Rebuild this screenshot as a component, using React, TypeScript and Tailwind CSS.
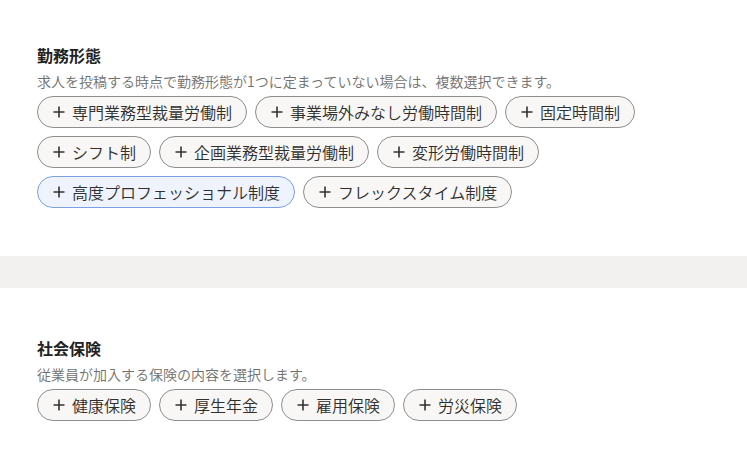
import React from "react";

const font = { fontFamily: '"Noto Sans CJK JP", "Noto Sans", sans-serif' };

function PlusIcon() {
  return (
    <svg width="12" height="12" viewBox="0 0 12 12" className="shrink-0">
      <path d="M6 0.5v11M0.5 6h11" stroke="#333333" strokeWidth="1.6" />
    </svg>
  );
}

function Chip({ label, selected }: { label: string; selected?: boolean }) {
  return (
    <button
      className={
        "flex h-8 items-center gap-[7px] rounded-full border pl-[15px] pr-[14px] text-base font-[350] text-[#2f2f2f] " +
        (selected ? "border-[#7d9fe6] bg-[#eef3fd]" : "border-[#8e8e8e] bg-[#f8f7f5]")
      }
    >
      <PlusIcon />
      <span className="leading-none">{label}</span>
    </button>
  );
}

function Section({ title, desc, items, selected = [] }: { title: string; desc: string; items: string[]; selected?: string[] }) {
  return (
    <div className="px-[37px]">
      <h2 className="text-base font-bold leading-6 text-[#222222]">{title}</h2>
      <p className="mt-1 text-sm font-[350] leading-5 text-[#6f6f6f]">{desc}</p>
      <div className="mt-[5px] flex flex-wrap gap-2">
        {items.map((it) => (
          <Chip key={it} label={it} selected={selected.includes(it)} />
        ))}
      </div>
    </div>
  );
}

export default function App() {
  return (
    <div className="h-[455px] w-[747px] overflow-hidden bg-white" style={font}>
      <div className="pt-[43px] pb-12">
        <Section
          title="勤務形態"
          desc="求人を投稿する時点で勤務形態が1つに定まっていない場合は、複数選択できます。"
          items={[
            "専門業務型裁量労働制",
            "事業場外みなし労働時間制",
            "固定時間制",
            "シフト制",
            "企画業務型裁量労働制",
            "変形労働時間制",
            "高度プロフェッショナル制度",
            "フレックスタイム制度",
          ]}
          selected={["高度プロフェッショナル制度"]}
        />
      </div>
      <div className="h-8 bg-[#f2f1ef]" />
      <div className="pt-12">
        <Section
          title="社会保険"
          desc="従業員が加入する保険の内容を選択します。"
          items={["健康保険", "厚生年金", "雇用保険", "労災保険"]}
        />
      </div>
    </div>
  );
}
